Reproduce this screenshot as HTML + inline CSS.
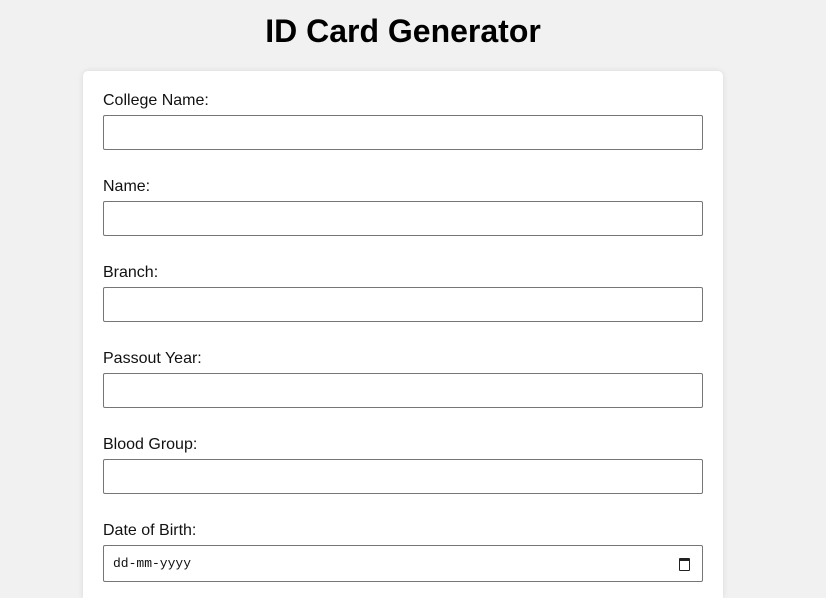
<!DOCTYPE html>
<html style="height:598px;overflow:hidden"><head><style>
body{margin:0;background:#f1f1f1;font-family:"Liberation Sans",Arial,sans-serif;width:826px;height:598px;overflow:hidden;position:relative}
h1{position:absolute;top:13px;left:-10px;width:826px;text-align:center;margin:0;font-size:32px;line-height:37px;font-weight:bold;color:#000}
.card{position:absolute;left:83px;top:71px;width:640px;height:527px;background:#fff;border-radius:5px 5px 0 0;box-shadow:0 0 6px rgba(0,0,0,0.1)}
.lab{position:absolute;left:20px;font-size:16px;line-height:18px;color:#111}
.inp{position:absolute;left:20px;width:598px;height:33px;border:1px solid #767676;border-radius:2px;background:#fff}
.d{font-family:"Liberation Mono",monospace;font-size:13px;line-height:35px;padding-left:9px;box-sizing:border-box;width:600px;height:37px;color:#111}
.cal{position:absolute;right:12px;top:12px;width:9px;height:9px;border:1.5px solid #222;border-top-width:3px;border-radius:1px}
</style></head><body>
<h1>ID Card Generator</h1>
<div class="card">
<div class="lab" style="top:21px">College Name:</div><div class="inp" style="top:44px"></div>
<div class="lab" style="top:107px">Name:</div><div class="inp" style="top:130px"></div>
<div class="lab" style="top:193px">Branch:</div><div class="inp" style="top:216px"></div>
<div class="lab" style="top:279px">Passout Year:</div><div class="inp" style="top:302px"></div>
<div class="lab" style="top:365px">Blood Group:</div><div class="inp" style="top:388px"></div>
<div class="lab" style="top:451px">Date of Birth:</div><div class="inp d" style="top:474px">dd-mm-yyyy<span class="cal"></span></div>
</div>
</body></html>
